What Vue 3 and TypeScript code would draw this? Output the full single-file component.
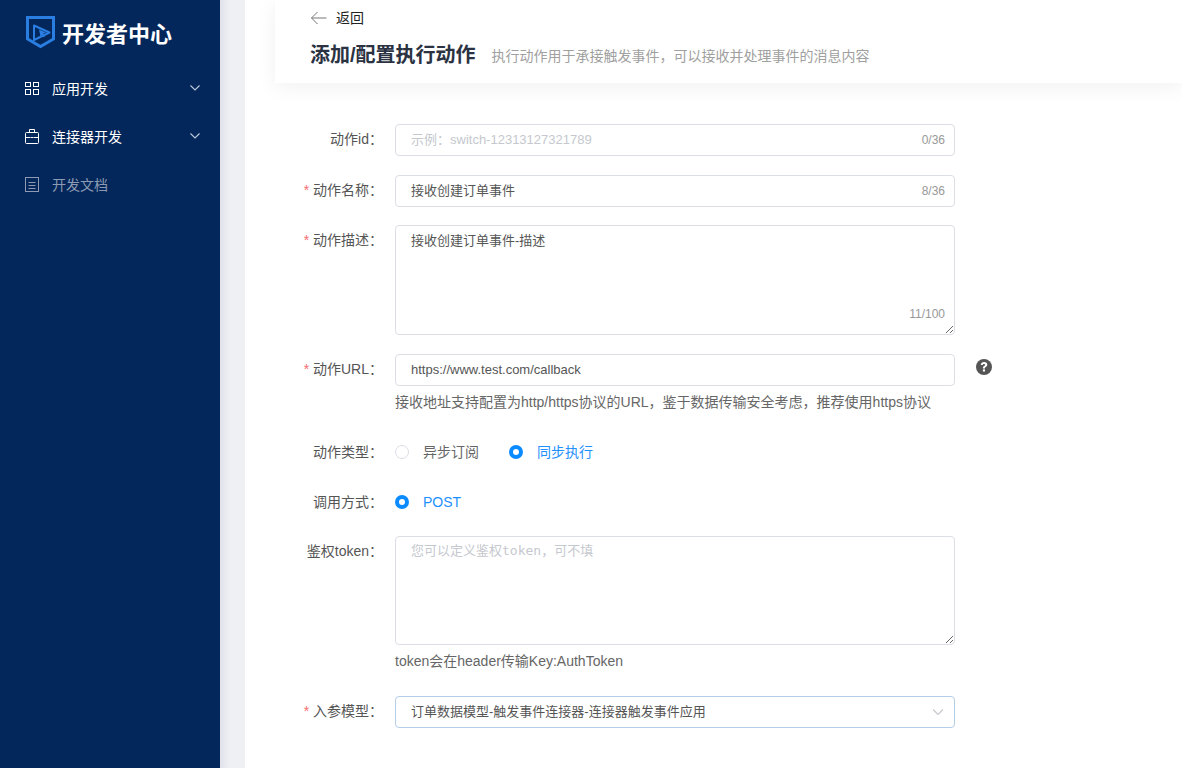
<template>
  <div class="layout">
    <aside class="sidebar">
      <div class="logo">
        <svg class="logo-mark" width="29" height="33" viewBox="0 0 29 33" fill="none">
          <path d="M1.500 1.500h26V23l-13 7.500-13-7.500z" stroke="#2a7de1" stroke-width="3" />
          <path d="M8 9.500 23.500 16.500 8 24z" stroke="#2a7de1" stroke-width="2" stroke-linejoin="round" />
          <path d="M13 13.500l7 3-3 1.200 2 2.600-1.200 1-2-2.600-1.200 2.300z" fill="#2a7de1" />
        </svg>
        <span class="logo-text">开发者中心</span>
      </div>
      <nav class="menu">
        <div v-for="item in menuItems" :key="item.label" :class="['menu-item', { muted: item.muted }]">
          <svg class="menu-icon" width="14" height="15" viewBox="0 0 14 15" fill="none" stroke="currentColor" stroke-width="1">
            <template v-if="item.icon === 'grid'">
              <rect x="0.500" y="1.500" width="5" height="4" />
              <rect x="8.500" y="1.500" width="5" height="4" />
              <rect x="0.500" y="8.500" width="5" height="5" />
              <rect x="8.500" y="8.500" width="5" height="5" />
            </template>
            <template v-else-if="item.icon === 'case'">
              <rect x="0.500" y="3.500" width="13" height="11" rx="1" />
              <path d="M4.500 3.500V0.500h5v3M0.500 8.500h5M8.500 8.500h5M6 8.500h2" />
            </template>
            <template v-else>
              <rect x="0.500" y="0.500" width="13" height="14" />
              <path d="M3.500 5.500h7M3.500 8.500h7M3.500 11.500h7" />
            </template>
          </svg>
          <span class="menu-label">{{ item.label }}</span>
          <svg v-if="item.arrow" class="menu-arrow" width="12" height="8" viewBox="0 0 12 8" fill="none" stroke="currentColor" stroke-width="1.200">
            <path d="M1.500 1.500 6 6l4.500-4.500" />
          </svg>
        </div>
      </nav>
    </aside>

    <div class="gutter"></div>

    <main class="content">
      <header class="page-header">
        <div class="back">
          <svg width="17" height="14" viewBox="0 0 17 14" fill="none" stroke="#777" stroke-width="1">
            <path d="M7.500 1 1.500 7l6 6M1.500 7h15" />
          </svg>
          <span class="back-text">返回</span>
        </div>
        <div class="title-row">
          <h1>添加/配置执行动作</h1>
          <span class="subtitle">执行动作用于承接触发事件，可以接收并处理事件的消息内容</span>
        </div>
      </header>

      <form class="form">
        <div class="row">
          <label class="label">动作id：</label>
          <div class="control">
            <input class="input" placeholder="示例：switch-12313127321789" />
            <span class="count">0/36</span>
          </div>
        </div>

        <div class="row row-name">
          <label class="label required">动作名称：</label>
          <div class="control">
            <input class="input input-cjk" value="接收创建订单事件" />
            <span class="count">8/36</span>
          </div>
        </div>

        <div class="row">
          <label class="label required">动作描述：</label>
          <div class="control">
            <textarea class="textarea textarea-desc">接收创建订单事件-描述</textarea>
            <span class="count count-area">11/100</span>
          </div>
        </div>

        <div class="row row-help">
          <label class="label required">动作URL：</label>
          <div class="control">
            <input class="input" value="https://www.test.com/callback" />
            <svg class="help-icon" width="16" height="16" viewBox="0 0 16 16">
              <circle cx="8" cy="8" r="8" fill="#555" />
              <path d="M4.800 6C4.900 4.200 6.200 3.100 8.100 3.100c1.900 0 3.200 1.100 3.200 2.600 0 1.100-.6 1.700-1.500 2.300-.7.400-.8.700-.8 1.400H6.900c0-1.200.3-1.900 1.200-2.400.7-.4 1-.7 1-1.200 0-.5-.4-.9-1.100-.9-.7 0-1.200.4-1.300 1.100z" fill="#fff" />
              <rect x="6.900" y="10.400" width="2.100" height="2.100" fill="#fff" />
            </svg>
            <p class="help">接收地址支持配置为http/https协议的URL，鉴于数据传输安全考虑，推荐使用https协议</p>
          </div>
        </div>

        <div class="row row-radio">
          <label class="label">动作类型：</label>
          <div class="radios">
            <span class="radio"><i class="dot"></i>异步订阅</span>
            <span class="radio checked"><i class="dot"></i>同步执行</span>
          </div>
        </div>

        <div class="row row-radio">
          <label class="label">调用方式：</label>
          <div class="radios">
            <span class="radio checked"><i class="dot"></i>POST</span>
          </div>
        </div>

        <div class="row row-help row-token">
          <label class="label">鉴权token：</label>
          <div class="control">
            <textarea class="textarea textarea-token" placeholder="您可以定义鉴权token，可不填"></textarea>
            <p class="help">token会在header传输Key:AuthToken</p>
          </div>
        </div>

        <div class="row">
          <label class="label required">入参模型：</label>
          <div class="control">
            <div class="select">
              <span class="select-text">订单数据模型-触发事件连接器-连接器触发事件应用</span>
              <svg width="12" height="8" viewBox="0 0 12 8" fill="none" stroke="#c5c8ce" stroke-width="1.200">
                <path d="M1 1.500 6 6.500l5-5" />
              </svg>
            </div>
          </div>
        </div>
      </form>
    </main>
  </div>
</template>

<script setup lang="ts">
interface MenuItem {
  label: string;
  icon: 'grid' | 'case' | 'doc';
  arrow: boolean;
  muted?: boolean;
}

const menuItems: MenuItem[] = [
  { label: '应用开发', icon: 'grid', arrow: true },
  { label: '连接器开发', icon: 'case', arrow: true },
  { label: '开发文档', icon: 'doc', arrow: false, muted: true },
];
</script>

<style>
html,
body {
  margin: 0;
  background: #fff;
  overflow: hidden;
}
</style>

<style scoped>
.layout {
  display: flex;
  height: 768px;
  overflow: hidden;
  font-family: "Liberation Sans", "Noto Sans CJK SC", sans-serif;
  font-size: 14px;
  color: #555;
}

.sidebar {
  width: 220px;
  flex-shrink: 0;
  background: #03275b;
}

.logo {
  display: flex;
  align-items: center;
  height: 32px;
  padding: 16px 0 16px 26px;
}

.logo-mark {
  margin-right: 7px;
}

.logo-text {
  font-size: 22px;
  font-weight: 700;
  color: #fff;
}

.menu-item {
  display: flex;
  align-items: center;
  height: 48px;
  padding: 0 19px 0 25px;
  color: #fff;
  font-size: 14px;
}

.menu-item.muted {
  color: #8c9bb3;
}

.menu-icon {
  margin-right: 13px;
}

.menu-label {
  flex: 1;
}

.menu-arrow {
  color: #b9c6da;
}

.gutter {
  width: 25px;
  flex-shrink: 0;
  background: linear-gradient(to right, #dfe2e9, #eef0f4 10px);
}

.content {
  flex: 1;
  min-width: 0;
  padding-left: 30px;
}

.page-header {
  height: 83px;
  box-sizing: border-box;
  padding: 8px 0 0 35px;
  background: #fff;
  box-shadow: 0 4px 20px rgba(0, 0, 0, 0.06);
}

.back {
  display: flex;
  align-items: center;
  gap: 9px;
  height: 20px;
  font-size: 14px;
  color: #222;
}

.back-text {
  padding-bottom: 2px;
}

.title-row {
  display: flex;
  align-items: center;
  margin-top: 13px;
}

.title-row h1 {
  margin: 0 16px 0 0;
  font-size: 20px;
  line-height: 28px;
  font-weight: 700;
  color: #2b3242;
}

.subtitle {
  padding-top: 2px;
  font-size: 14px;
  line-height: 20px;
  color: #a0a0a0;
}

.form {
  padding-top: 41px;
}

.row {
  display: flex;
  align-items: flex-start;
  margin-bottom: 19px;
}

.row-name {
  margin-bottom: 18px;
}

.label {
  width: 108px;
  margin-right: 12px;
  line-height: 30px;
  text-align: right;
  white-space: nowrap;
  color: #555;
  font-size: 14px;
}

.required::before {
  content: "* ";
  color: #f56c6c;
}

.control {
  position: relative;
  width: 560px;
}

.input,
.textarea {
  display: block;
  width: 100%;
  box-sizing: border-box;
  border: 1px solid #dcdee5;
  border-radius: 4px;
  background: #fff;
  font-family: inherit;
  font-size: 13px;
  color: #555;
  outline: none;
}

.input {
  height: 32px;
  padding: 0 60px 2px 15px;
}

.input-cjk {
  padding-bottom: 4px;
}

.textarea {
  height: 110px;
  padding: 5px 15px;
  line-height: 18px;
}

.textarea-desc {
  padding-top: 6px;
}

.textarea-token {
  height: 109px;
  font-family: "DejaVu Sans Mono", "Noto Sans CJK SC", monospace;
}

.input::placeholder,
.textarea::placeholder {
  color: #c5c8ce;
  opacity: 1;
}

.count {
  position: absolute;
  right: 10px;
  top: 9px;
  font-size: 12px;
  line-height: 14px;
  color: #999;
}

.count-area {
  top: auto;
  bottom: 14px;
}

.help-icon {
  position: absolute;
  left: 581px;
  top: 5px;
}

.help {
  margin: 0;
  padding-top: 6px;
  line-height: 20px;
  color: #666;
  font-size: 14px;
  white-space: nowrap;
}

.row-help {
  margin-bottom: 24px;
}

.row-radio {
  align-items: center;
  margin-bottom: 18px;
}

.radios {
  display: flex;
  gap: 30px;
}

.radio {
  display: flex;
  align-items: center;
  gap: 14px;
  line-height: 30px;
  height: 32px;
  color: #666;
}

.radio.checked {
  color: #1e90ff;
}

.dot {
  width: 14px;
  height: 14px;
  box-sizing: border-box;
  border: 1px solid #dcdee5;
  border-radius: 50%;
  background: #fff;
}

.checked .dot {
  border: 4px solid #0a8bff;
}

.row-token {
  margin-bottom: 25px;
}

.select {
  display: flex;
  align-items: center;
  justify-content: space-between;
  height: 32px;
  box-sizing: border-box;
  padding: 0 10px 0 15px;
  border: 1px solid #b4cde8;
  border-radius: 4px;
  font-size: 13px;
  color: #555;
}

.select-text {
  padding-bottom: 3px;
}
</style>
